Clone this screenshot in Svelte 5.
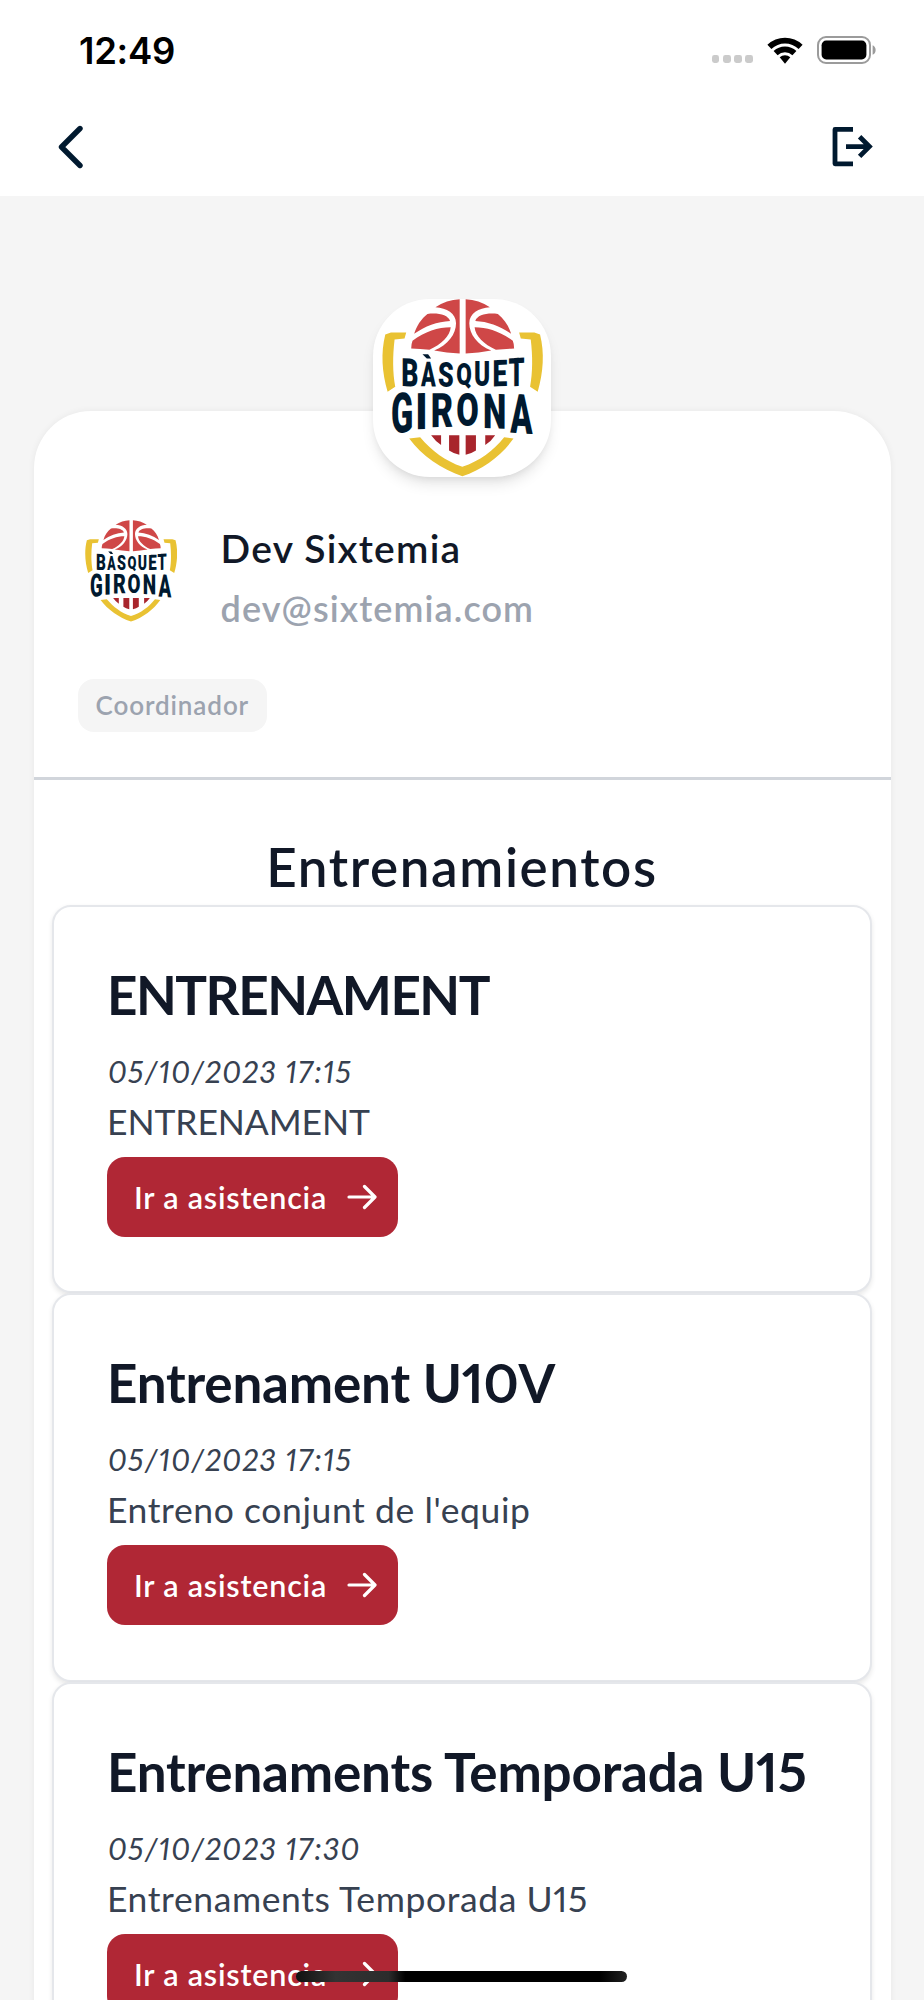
<script>
const user = {
    name: 'Dev Sixtemia',
    email: 'dev@sixtemia.com',
    role: 'Coordinador'
};

const trainings = [
    { title: 'ENTRENAMENT', date: '05/10/2023 17:15', description: 'ENTRENAMENT' },
    { title: 'Entrenament U10V', date: '05/10/2023 17:15', description: "Entreno conjunt de l'equip" },
    { title: 'Entrenaments Temporada U15', date: '05/10/2023 17:30', description: 'Entrenaments Temporada U15' }
];

const isCaps = (text) => text === text.toUpperCase();

// every letter of the crest has its own box: x, width, top, baseline, slant
const crestLetters = [
    { char: 'B', x: 127, width: 45, top: 206, base: 290, skew: 3 },
    { char: 'A', x: 182, width: 45, top: 217, base: 291, skew: 1 },
    { char: 'S', x: 236, width: 43, top: 219, base: 292, skew: 0 },
    { char: 'Q', x: 291, width: 42, top: 220, base: 287, skew: 0 },
    { char: 'U', x: 346, width: 41, top: 216, base: 291, skew: 0 },
    { char: 'E', x: 402, width: 39, top: 212, base: 291, skew: -2 },
    { char: 'T', x: 447, width: 46, top: 207, base: 292, skew: -4 },
    { char: 'G', x: 96, width: 59, top: 312, base: 431, skew: -3 },
    { char: 'I', x: 173, width: 21, top: 312, base: 420, skew: -2 },
    { char: 'R', x: 217, width: 60, top: 312, base: 414, skew: -1 },
    { char: 'O', x: 292, width: 61, top: 312, base: 411, skew: 0 },
    { char: 'N', x: 374, width: 60, top: 313, base: 417, skew: 2 },
    { char: 'A', x: 450, width: 68, top: 313, base: 430, skew: 4 }
];

// ink of each glyph at font-size 100: left bearing and width
const ink = {
    A: [-1, 69], B: [5, 56], S: [3, 57], Q: [3, 62], U: [5, 56], E: [5, 49],
    T: [1, 60], G: [4, 60], I: [6, 17], R: [5, 58], O: [3, 62], N: [5, 60]
};

const place = (l) => {
    const sx = l.width / ink[l.char][1];
    const sy = (l.base - l.top) / 71;
    return `translate(${l.x} ${l.base}) skewY(${l.skew}) scale(${sx} ${sy}) translate(${-ink[l.char][0]} 0)`;
};
</script>

{#snippet crestHalf()}
  <path fill="#cf4747" d="M226 53Q259 31 299 29V192Q260 190 222 183C264 166 288 134 288 101C288 72 260 55 226 53Z" />
  <path fill="#cf4747" d="M202 73C235 69 264 76 270 94C232 96 194 109 162 133C169 109 183 88 202 73Z" />
  <path fill="#cf4747" d="M153 177Q153 164 157 154C194 126 234 113 272 113C270 139 244 164 208 181Q180 178 153 177Z" />
  <path fill="#e9c233" d="M75 135L92 129H138L133 147L103 150C97 200 97 250 105 292L82 307C65 250 61 190 75 135Z" />
{/snippet}

{#snippet crest()}
  {@render crestHalf()}
  <g transform="translate(616 0) scale(-1 1)">{@render crestHalf()}</g>
  <path fill="#e9c233" d="M147 448L180 444C215 485 255 515 307 533C360 515 400 485 433 444L461 448C425 500 370 540 307 562C245 540 185 500 147 448Z" />
  <path fill="#a8252c" d="M213 438H243V468Q226 456 213 438ZM267 438H298V497Q280 493 267 484ZM317 438H348V484Q335 493 317 497ZM376 438H406Q394 456 376 468Z" />
  <path fill="#00192f" d="M187 194H204L213 207H200Z" />
  {#each crestLetters as letter}
    <text class="crest-letter" transform={place(letter)}>{letter.char}</text>
  {/each}
{/snippet}

<div class="screen">
  <div class="status">
    <span class="time">12:49</span>
    <div class="indicators">
      <div class="dots"><i></i><i></i><i></i><i></i></div>
      <svg class="wifi" viewBox="0 0 36 27" width="36" height="27">
        <path d="M0.4 7.8A25.5 25.5 0 0 1 35.6 7.8L31.6 12A19.6 19.6 0 0 0 4.4 12Z" />
        <path d="M6.6 14A16.5 16.5 0 0 1 29.4 14L25.4 18.2A10.7 10.7 0 0 0 10.6 18.2Z" />
        <path d="M12.7 20.3A7.8 7.8 0 0 1 23.3 20.3L18 26.8Z" />
      </svg>
      <svg class="battery" viewBox="0 0 60 28" width="60" height="28">
        <rect x="1" y="1" width="52" height="26" rx="8" fill="none" stroke="#9b9b9b" stroke-width="2" />
        <rect x="4.6" y="4.6" width="44.8" height="18.8" rx="4.6" />
        <path d="M55.6 9.2C59.6 10.8 59.6 17.2 55.6 18.8Z" fill="#9b9b9b" />
      </svg>
    </div>
  </div>

  <div class="nav">
    <svg viewBox="0 0 26 44" width="26" height="44">
      <path d="M22 3.5L3.5 22L22 40.5" fill="none" stroke="#00192f" stroke-width="5.4" stroke-linecap="round" stroke-linejoin="round" />
    </svg>
    <svg viewBox="0 0 42 42" width="42" height="42">
      <path d="M21 3.4H3V37.8H21" fill="none" stroke="#00192f" stroke-width="4.8" stroke-linejoin="round" />
      <path d="M14 20.6H37M27.6 10.8L37.4 20.6L27.6 30.4" fill="none" stroke="#00192f" stroke-width="4.8" />
    </svg>
  </div>

  <main>
    <div class="badge">
      <svg viewBox="38 28 536 536" width="178" height="178">{@render crest()}</svg>
    </div>

    <section class="panel">
      <div class="user">
        <svg viewBox="66 28 482 536" width="92" height="102">{@render crest()}</svg>
        <div>
          <div class="name">{user.name}</div>
          <div class="email">{user.email}</div>
        </div>
      </div>
      <span class="chip">{user.role}</span>
      <hr />

      <h1>Entrenamientos</h1>
      {#each trainings as training}
        <article class="card">
          <h2 class:caps={isCaps(training.title)}>{training.title}</h2>
          <div class="date">{training.date}</div>
          <div class="description" class:caps={isCaps(training.description)}>{training.description}</div>
          <a class="button" href="#top">
            <span>Ir a asistencia</span>
            <svg viewBox="0 0 30 26" width="30" height="26">
              <path d="M2 13H27.5M17.5 2.5L28 13L17.5 23.5" fill="none" stroke="#fff" stroke-width="3.2" stroke-linecap="round" stroke-linejoin="round" />
            </svg>
          </a>
        </article>
      {/each}
    </section>
  </main>
  <div class="home"></div>
</div>

<style>
:global(body) {
  margin: 0;
}

.screen {
  position: relative;
  width: 924px;
  height: 2000px;
  overflow: hidden;
  background-color: #f5f5f5;
  font-family: Lato, "Open Sans", sans-serif;
  font-variant-numeric: proportional-nums;
  color: #111827;
}

.status {
  display: flex;
  justify-content: space-between;
  height: 100px;
  padding: 0 47px 0 79px;
  background-color: #fff;
  box-sizing: border-box;
}

.time {
  margin-top: 28px;
  font-family: Inter, sans-serif;
  font-size: 36.5px;
  font-weight: 600;
  line-height: 46px;
  letter-spacing: -0.3px;
  color: #000;
}

.indicators {
  display: flex;
  align-items: flex-end;
  height: 64px;
}

.dots {
  display: flex;
  gap: 3.4px;
  margin: 0 14px 1px 0;
}

.dots i {
  width: 7.8px;
  height: 7.8px;
  border-radius: 2.4px;
  background-color: #cbcbcb;
}

.wifi {
  margin-right: 14px;
}

.nav {
  display: flex;
  justify-content: space-between;
  align-items: center;
  height: 96px;
  padding: 0 50px 2px 58px;
  background-color: #fff;
  box-sizing: border-box;
}

main {
  display: flex;
  flex-direction: column;
  align-items: center;
  padding-top: 103px;
}

.badge {
  position: relative;
  z-index: 1;
  width: 178px;
  height: 178px;
  border-radius: 57px;
  background-color: #fff;
  box-shadow: 0 9px 14px -2px rgba(0, 0, 0, 0.1), 0 4px 9px -4px rgba(0, 0, 0, 0.1);
  overflow: hidden;
}

.badge svg {
  display: block;
}

.crest-letter {
  font-family: Roboto, sans-serif;
  font-size: 100px;
  font-weight: 900;
  fill: #00192f;
}

.panel {
  width: 857px;
  margin-top: -66px;
  padding-top: 109px;
  border-radius: 57px 57px 0 0;
  background-color: #fff;
  box-shadow: 0 0 7px rgba(0, 0, 0, 0.06);
  box-sizing: border-box;
}

.user {
  display: flex;
  gap: 44px;
  height: 112px;
  margin-left: 51px;
}

.name {
  font-size: 39px;
  font-weight: 600;
  line-height: 56px;
  letter-spacing: 1.25px;
}

.email {
  margin-top: 7px;
  font-size: 36px;
  font-weight: 600;
  line-height: 50px;
  letter-spacing: 1.1px;
  color: #9ca3af;
}

.chip {
  display: block;
  width: fit-content;
  height: 53px;
  margin: 47px 0 45px 44.5px;
  padding: 0 17.5px;
  border-radius: 16px;
  background-color: #f5f5f5;
  color: #9ca3af;
  font-size: 26px;
  font-weight: 600;
  line-height: 52px;
  letter-spacing: 0.9px;
}

hr {
  height: 3px;
  margin: 0;
  border: 0;
  background-color: #d1d5db;
}

h1 {
  margin: 54px 0 5px;
  font-size: 53px;
  font-weight: 600;
  line-height: 66px;
  text-align: center;
  letter-spacing: 1.6px;
}

.card {
  width: 820px;
  height: 388.4px;
  margin: 0 auto;
  padding: 55px 53px 0;
  border: 2.4px solid #e5e7eb;
  border-radius: 19px;
  background-color: #fff;
  box-shadow: 0 2.4px 5px rgba(0, 0, 0, 0.09);
  box-sizing: border-box;
}

h2 {
  margin: 0;
  font-size: 53px;
  font-weight: 700;
  line-height: 66px;
  letter-spacing: -0.2px;
  white-space: nowrap;
}

h2.caps {
  letter-spacing: -1.5px;
}

.date {
  margin: 23px 0 0 1px;
  font-size: 30.5px;
  font-style: italic;
  line-height: 40px;
  letter-spacing: 1.2px;
  color: #374151;
}

.description {
  margin-top: 6px;
  font-size: 35.5px;
  line-height: 50px;
  letter-spacing: 0.6px;
  color: #374151;
}

.description.caps {
  letter-spacing: -0.1px;
}

.button {
  display: flex;
  align-items: center;
  justify-content: space-between;
  width: 290.5px;
  height: 80px;
  margin-top: 10px;
  padding: 0 21px 0 27px;
  border-radius: 18px;
  background-color: #b02735;
  color: #fff;
  font-size: 30.5px;
  font-weight: 600;
  letter-spacing: 0.8px;
  text-decoration: none;
  box-sizing: border-box;
}

.home {
  position: absolute;
  left: 296px;
  bottom: 18px;
  width: 331px;
  height: 11px;
  border-radius: 6px;
  background: linear-gradient(90deg, #111 0, #333 12%, #2c2c2c 28%, #000 33%, #000 92%, #222 100%);
}
</style>
